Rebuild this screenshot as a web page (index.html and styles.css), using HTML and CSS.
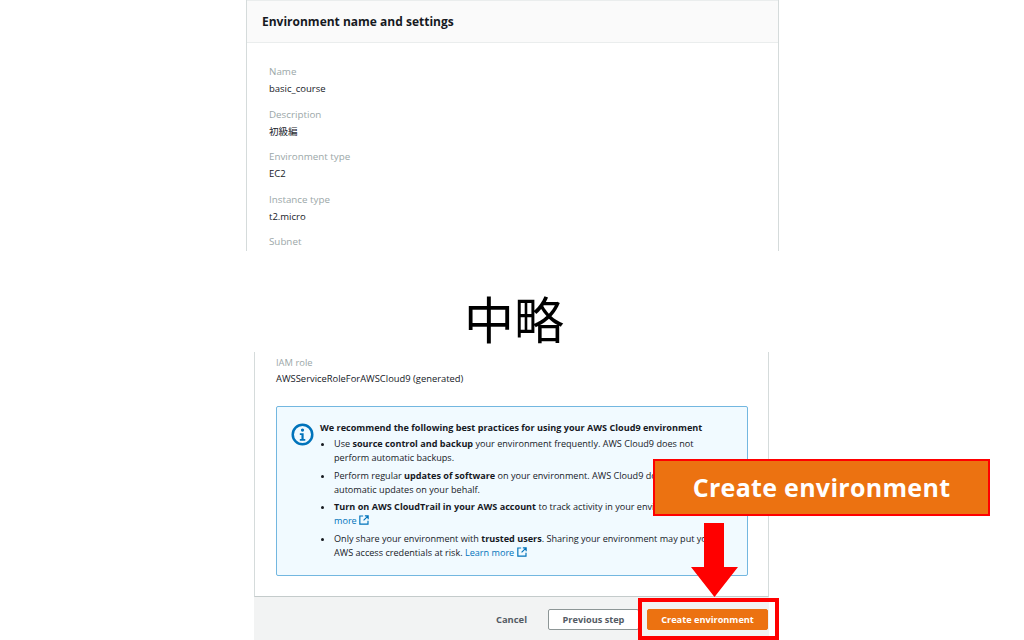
FILE: index.html
```html
<!DOCTYPE html>
<html lang="en">
<head>
    <meta charset="UTF-8">
    <meta name="viewport" content="width=device-width, initial-scale=1.0">
    <title>Create environment</title>
    <link rel="stylesheet" href="styles.css">
</head>
<body>
    <section class="settings">
        <h2 class="settings-title">Environment name and settings</h2>
        <dl class="settings-list">
            <dt>Name</dt>
            <dd>basic_course</dd>
            <dt>Description</dt>
            <dd>初級編</dd>
            <dt>Environment type</dt>
            <dd>EC2</dd>
            <dt>Instance type</dt>
            <dd>t2.micro</dd>
            <dt>Subnet</dt>
        </dl>
    </section>

    <div class="omitted">中略</div>

    <section class="review">
        <div class="review-body">
            <div class="field-label">IAM role</div>
            <div class="field-value">AWSServiceRoleForAWSCloud9 (generated)</div>

            <div class="info-box">
                <svg class="info-icon" viewBox="0 0 24 24" width="23" height="23">
                    <circle cx="12" cy="12" r="10.2" fill="none" stroke="#0073bb" stroke-width="2.6"/>
                    <circle cx="12" cy="7.4" r="1.7" fill="#0073bb"/>
                    <path d="M9.2 10.6h4v6.2h1.700v1.800H9.2v-1.800h1.700v-4.400H9.200z" fill="#0073bb"/>
                </svg>
                <div class="info-text">
                    <div class="info-title">We recommend the following best practices for using your AWS Cloud9 environment</div>
                    <ul class="info-list">
                        <li>Use <b>source control and backup</b> your environment frequently. AWS Cloud9 does not perform automatic backups.</li>
                        <li>Perform regular <b>updates of software</b> on your environment. AWS Cloud9 does not perform automatic updates on your behalf.</li>
                        <li><b>Turn on AWS CloudTrail in your AWS account</b> to track activity in your environment. <a href="#">Learn more <svg class="ext-icon" viewBox="0 0 12 12" width="10" height="10"><path d="M5 1.2H1v9.800h9.800V7M7 1h4v4M11 1L5.500 6.500" fill="none" stroke="#0073bb" stroke-width="1.4"/></svg></a></li>
                        <li>Only share your environment with <b>trusted users</b>. Sharing your environment may put your AWS access credentials at risk. <a href="#">Learn more <svg class="ext-icon" viewBox="0 0 12 12" width="10" height="10"><path d="M5 1.2H1v9.800h9.800V7M7 1h4v4M11 1L5.500 6.500" fill="none" stroke="#0073bb" stroke-width="1.4"/></svg></a></li>
                    </ul>
                </div>
            </div>
        </div>
        <div class="review-footer">
            <span class="cancel">Cancel</span>
            <button class="btn">Previous step</button>
            <button class="btn btn-primary">Create environment</button>
        </div>
    </section>

    <!-- annotations on top of the screenshot -->
    <div class="callout">Create environment</div>
    <svg class="arrow" viewBox="0 0 47 74" width="47" height="74">
        <path d="M13 0h20v44h14L23.500 74 0 44h13z" fill="#ff0000"/>
    </svg>
    <div class="highlight"></div>
</body>
</html>
```

FILE: styles.css
```css
html, body {
    height: 100%;
}
body {
    margin: 0;
    width: 1024px;
    height: 640px;
    overflow: hidden;
    position: relative;
    background: #fff;
    font-family: "Open Sans", "Noto Sans CJK JP", sans-serif;
    color: #16191f;
}

/* top panel */
.settings {
    margin-left: 246px;
    width: 533px;
    height: 251px;
    box-sizing: border-box;
    border-left: 1px solid #d5dbdb;
    border-right: 1px solid #d5dbdb;
    overflow: hidden;
}
.settings-title {
    margin: 0;
    height: 43px;
    box-sizing: border-box;
    padding-left: 15px;
    line-height: 42px;
    font-size: 12px;
    font-weight: 700;
    background: #fafafa;
    border-top: 1px solid #eaeded;
    border-bottom: 1px solid #eaeded;
}
.settings-list {
    margin: 0;
    padding: 21px 0 0 22px;
    font-size: 9.800px;
    line-height: 16px;
}
.settings-list dt {
    color: #9ba7a8;
}
.settings-list dd {
    margin: 1px 0 9.600px;
    font-size: 9.500px;
}

.omitted {
    height: 101px;
    line-height: 132px;
    text-align: center;
    font-size: 50px;
    color: #000;
    font-family: "Noto Sans CJK JP", sans-serif;
    margin-left: 4px;
}

/* bottom panel */
.review {
    margin-left: 254px;
    width: 515px;
    height: 288px;
    display: flex;
    flex-direction: column;
}
.review-body {
    flex: 1;
    box-sizing: border-box;
    padding: 3px 20px 0 21px;
    border-left: 1px solid #d5dbdb;
    border-right: 1px solid #d5dbdb;
    border-bottom: 1px solid #c4cbcb;
    font-size: 9.400px;
}
.field-label {
    color: #9ba7a8;
    line-height: 16px;
}
.field-value {
    line-height: 16px;
}
.info-box {
    display: flex;
    gap: 6px;
    margin-top: 19px;
    height: 170px;
    box-sizing: border-box;
    padding: 14px 20px 0 14px;
    background: #f1faff;
    border: 1px solid #73b7e0;
    border-radius: 2px;
}
.info-icon {
    flex: none;
    margin-top: 2px;
}
.info-title {
    font-weight: 700;
    font-size: 9.100px;
    line-height: 14px;
    white-space: nowrap;
}
.info-list {
    margin: 2px 0 0;
    padding-left: 14px;
    font-size: 9.100px;
    line-height: 14px;
}
.info-list li {
    margin-bottom: 3.500px;
}
.info-list a {
    color: #0073bb;
    text-decoration: none;
}
.ext-icon {
    vertical-align: -1px;
}

.review-footer {
    height: 43px;
    flex: none;
    box-sizing: border-box;
    padding: 2px 1px 0 0;
    display: flex;
    align-items: center;
    justify-content: flex-end;
    background: #f2f3f3;
}
.cancel {
    margin-right: 21px;
    font-size: 9.400px;
    font-weight: 700;
    color: #545b64;
}
.btn {
    height: 21px;
    width: 91px;
    padding: 0;
    box-sizing: border-box;
    background: #fff;
    border: 1px solid #8d9696;
    border-radius: 2px;
    font-family: inherit;
    font-size: 9.200px;
    font-weight: 700;
    color: #545b64;
}
.btn-primary {
    width: 121px;
    margin-left: 8px;
    background: #ec7211;
    border-color: #ec7211;
    color: #fff;
}

/* annotations */
.callout {
    position: absolute;
    left: 653px;
    top: 459px;
    width: 337px;
    height: 57px;
    box-sizing: border-box;
    border: 2px solid #ff0000;
    background: #ec7211;
    color: #fff;
    text-align: center;
    line-height: 53px;
    font-size: 25px;
    font-weight: 700;
    letter-spacing: 0.3px;
}
.arrow {
    position: absolute;
    left: 691px;
    top: 523px;
}
.highlight {
    position: absolute;
    left: 638px;
    top: 598px;
    width: 141px;
    height: 42px;
    box-sizing: border-box;
    border: 4px solid #ff0000;
}
```
